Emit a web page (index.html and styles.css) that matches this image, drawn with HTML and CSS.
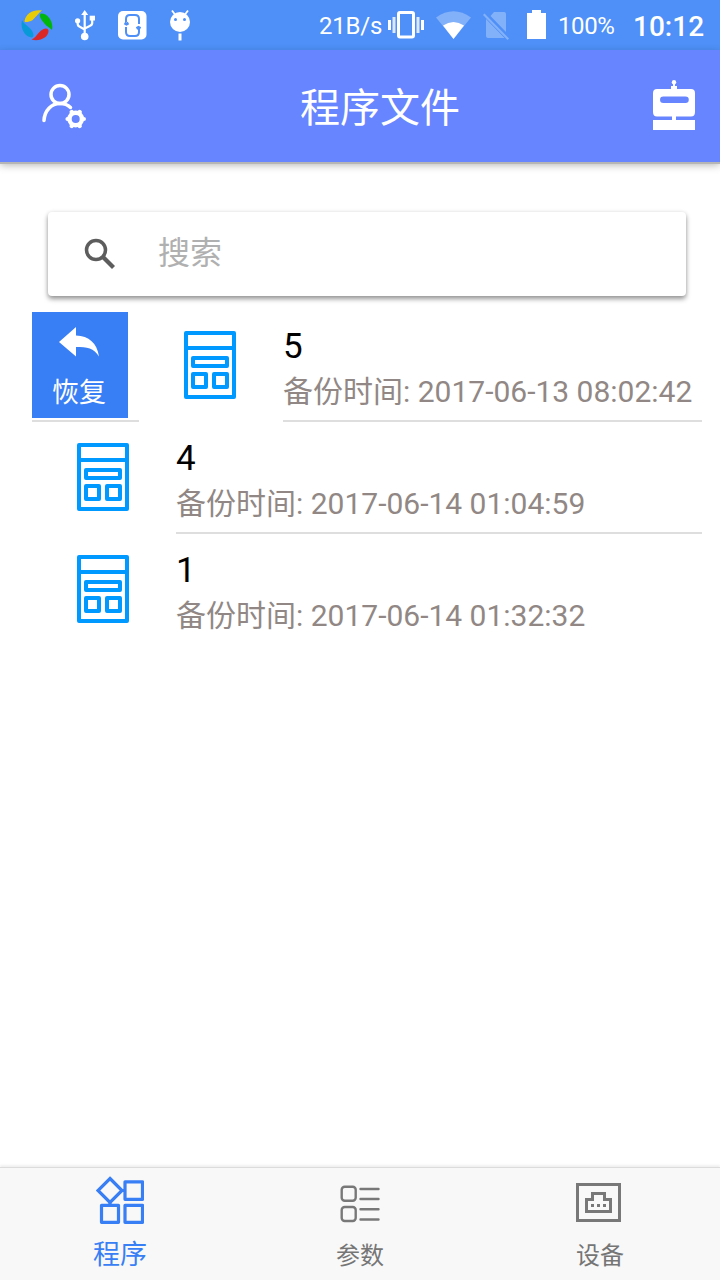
FILE: index.html
```html
<!DOCTYPE html>
<html lang="zh-CN">
<head>
<meta charset="utf-8">
<title>程序文件</title>
<link rel="stylesheet" href="styles.css">
</head>
<body>
<svg width="0" height="0" class="defs">
  <symbol id="doc" viewBox="0 0 52 68">
    <g fill="none" stroke="#0099ff" stroke-width="4" stroke-linejoin="round">
      <rect x="2" y="2" width="48" height="64"/>
      <path d="M2 17H50"/>
      <rect x="9" y="27" width="34" height="8"/>
      <rect x="9" y="43" width="13" height="13"/>
      <rect x="30" y="43" width="13" height="13"/>
    </g>
  </symbol>
</svg>
<div class="status">
  <div class="status-left">
    <svg width="32" height="32" viewBox="0 0 32 32">
      <path d="M3.500 12C5 4 13 0 21 1.500C18 3 17 6 14 8.500C12 11 11 12 8 12.500C5 13.500 3.500 13 3.500 12Z" fill="#e8cc08"/>
      <path d="M20 4.500C26 4 33 12 31 21C29 18.500 26 18 23 14C19 9 17.500 6 20 4.500Z" fill="#00b50b"/>
      <path d="M27.500 21.500C28 28 19 33 10.500 30.500C14 29 15 27 18 23.500C22 19 27 18 27.500 21.500Z" fill="#db2827"/>
      <path d="M11 28.500C4 28-1 20 1 11C2 14 5 15.500 8 18.500C12 22 14 27 11 28.500Z" fill="#0799d8"/>
    </svg>
    <svg width="22" height="32" viewBox="0 0 22 32">
      <g fill="none" stroke="#fff" stroke-width="2.200"><path d="M9.700 5V26M2.700 12V15Q2.700 17 5.200 18L9.700 20.500M17.200 11V14Q17.200 16 14.700 17L9.700 19.500"/></g>
      <path d="M9.700 1L13.200 6H6.200Z" fill="#fff"/><circle cx="9.700" cy="27.500" r="3.800" fill="#fff"/><circle cx="2.600" cy="11.800" r="2.600" fill="#fff"/><path d="M14.700 6.700H20V11.500H14.700Z" fill="#fff"/>
    </svg>
    <svg width="29" height="29" viewBox="0 0 29 29">
      <rect width="28.500" height="28.500" rx="5" fill="#fff"/>
      <g fill="none" stroke="#4e90f7" stroke-width="2"><path d="M8 11V8Q8 4 12 4H17Q21 4 21 8V13"/><path d="M8 16V21Q8 25 12 25H17Q21 25 21 21V18"/><path d="M6.500 12L8.500 13L10.500 12M18.500 17.500L20.500 16.500L22.500 17.500" stroke-width="3"/></g>
    </svg>
    <svg width="20" height="32" viewBox="0 0 20 32">
      <circle cx="10" cy="13" r="10" fill="#fff"/><path d="M5 5.500L2 1.500M15 5.500L18 1.500" stroke="#fff" stroke-width="1.800"/><path d="M10 24.500V31.500" stroke="#fff" stroke-width="3"/>
      <circle cx="5.500" cy="10.500" r="1.500" fill="#4e90f7"/><circle cx="14.500" cy="10.500" r="1.500" fill="#4e90f7"/>
    </svg>
  </div>
  <div class="status-right">
    <span class="speed">21B/s</span>
    <svg class="vibrate" width="36" height="28" viewBox="0 0 36 28"><rect x="10.500" y="1.500" width="15" height="24.500" rx="1.500" fill="none" stroke="#fff" stroke-width="3"/><path d="M1.500 9V19M34.500 9V19" stroke="#fff" stroke-width="3"/><path d="M6 6V22M30 6V22" stroke="#fff" stroke-width="3" opacity=".8"/></svg>
    <svg class="wifi" width="35" height="28" viewBox="0 0 35 28"><path d="M0 6.500Q17.500-6 35 6.500L17.500 28Z" fill="#fff" opacity=".3"/><path d="M7 14.500Q17.500 7.500 28 14.500L17.500 28Z" fill="#fff"/></svg>
    <svg class="sim" width="26" height="28" viewBox="0 0 26 28"><g fill="#fff" opacity=".3"><path d="M11 0H21Q23 0 23 2V20L7.500 4ZM3 7L21.500 26H5Q3 26 3 24Z"/><path d="M1.500 1.500L26 26.500L24.500 28L0 3Z"/></g></svg>
    <svg class="battery" width="19" height="29" viewBox="0 0 19 29"><path d="M5 0H14V3H19V29H0V3H5Z" fill="#fff"/></svg>
    <span class="percent">100%</span>
    <span class="clock">10:12</span>
  </div>
</div>
<header class="header">
  <svg width="46" height="46" viewBox="0 0 46 46">
    <g fill="none" stroke="#fff" stroke-width="3.500" stroke-linecap="round"><circle cx="18" cy="11.500" r="9"/><path d="M2 37.500C2.500 27.500 9.500 20.500 18 20.500Q24.500 20.500 28.500 24.500"/></g>
    <g fill="none" stroke="#fff"><circle cx="33.700" cy="36" r="6.200" stroke-width="4.400"/><path stroke-width="4.200" stroke-linecap="round" d="M26 36H25.500M41.400 36H41.900M29.900 29.200L29.700 28.900M37.500 29.200L37.700 28.900M29.900 42.800L29.700 43.100M37.500 42.800L37.700 43.100"/></g>
  </svg>
  <h1>程序文件</h1>
  <svg class="robot" width="42" height="50" viewBox="0 0 42 50">
    <g fill="#fff"><circle cx="21" cy="2.200" r="2.200"/><path d="M20 3H22V6H24V10H18V6H20Z"/><path fill-rule="evenodd" d="M4 9H38Q42 9 42 13V32Q42 36.500 38 36.500H23V40H42V50H0V40H19V36.500H4Q0 36.500 0 32V13Q0 9 4 9ZM10.300 16.500A3.200 3.200 0 0 0 10.300 23H32.500A3.200 3.200 0 0 0 32.500 16.500Z"/></g>
  </svg>
</header>
<main>
  <div class="search">
    <svg width="32" height="32" viewBox="0 0 32 32" fill="none" stroke="#5d5d5d"><circle cx="12" cy="12" r="9.500" stroke-width="3.500"/><path d="M19 19L29.500 29.500" stroke-width="4.200"/></svg>
    <span>搜索</span>
  </div>
  <ul class="list">
    <li class="row">
      <div class="swipe">
        <div class="restore">
          <svg width="40" height="30" viewBox="0 0 40 30"><path d="M0 15L17 0V8.500C30 9 38 16 40 29.500C35 21 28 20 17 20V29.500Z" fill="#fff"/></svg>
          <span>恢复</span>
        </div>
      </div>
      <div class="item"><svg class="doc"><use href="#doc"/></svg><div class="info"><h2>5</h2><p>备份时间: 2017-06-13 08:02:42</p></div></div>
    </li>
    <li class="row">
      <div class="item"><svg class="doc"><use href="#doc"/></svg><div class="info"><h2>4</h2><p>备份时间: 2017-06-14 01:04:59</p></div></div>
    </li>
    <li class="row last">
      <div class="item"><svg class="doc"><use href="#doc"/></svg><div class="info"><h2>1</h2><p>备份时间: 2017-06-14 01:32:32</p></div></div>
    </li>
  </ul>
</main>
<nav class="tabs">
  <div class="tab active">
    <svg width="48" height="48" viewBox="0 0 48 48" fill="none" stroke="#387ef5" stroke-width="3.200" stroke-linejoin="round"><path d="M14 2.500L26 14.500L14 26.500L2 14.500Z" stroke-linejoin="miter"/><rect x="29" y="5.800" width="17.500" height="17.500"/><rect x="5.500" y="29.300" width="17" height="17"/><rect x="29" y="29.300" width="17.500" height="17"/><path d="M26 14.500H29M14 26.500V29"/></svg>
    <span>程序</span>
  </div>
  <div class="tab">
    <svg width="40" height="38" viewBox="0 0 40 38" fill="none" stroke="#787878" stroke-width="2.400" stroke-linecap="round"><rect x="1.700" y="1.700" width="14" height="14" rx="3"/><rect x="1.700" y="22" width="14" height="14" rx="3"/><path d="M20.500 4H38.500M20.500 14H38.500M20.500 24.200H38.500M20.500 34.500H38.500"/></svg>
    <span>参数</span>
  </div>
  <div class="tab">
    <svg width="45" height="39" viewBox="0 0 45 39" fill="none" stroke="#787878" stroke-width="3"><rect x="1.500" y="1.500" width="42" height="36"/><path d="M10.500 28.500V16.500H16.500V10.500H28.500V16.500H34.500V28.500Z"/><path d="M15 22.500H18M21 22.500H24M27 22.500H30"/></svg>
    <span>设备</span>
  </div>
</nav>
</body>
</html>
```
FILE: styles.css
```css
* { box-sizing: border-box; margin: 0; padding: 0; }
body {
  width: 720px;
  height: 1280px;
  display: flex;
  flex-direction: column;
  overflow: hidden;
  background: #fff;
  font-family: Roboto, "Noto Sans CJK SC", sans-serif;
}
svg { display: block; flex: none; }
.defs { position: absolute; }
.status {
  height: 50px;
  flex: none;
  display: flex;
  align-items: center;
  justify-content: space-between;
  padding: 0 16px 0 21px;
  background: #4e90f7;
  color: #fff;
}
.status-left, .status-right { display: flex; align-items: center; }
.status-left svg + svg { margin-left: 22px; }
.status-left svg:nth-child(3) { margin-left: 21px; }
.status-left svg:nth-child(4) { margin-left: 23px; }
.speed, .percent { font-size: 24px; line-height: 28px; padding-top: 2px; white-space: nowrap; }
.speed { width: 64px; letter-spacing: -0.2px; }
.vibrate { margin-left: 5px; }
.wifi { margin-left: 12px; }
.sim { margin-left: 12px; margin-top: 2px; }
.battery { margin-left: 18px; margin-bottom: 1px; }
.percent { margin-left: 12px; width: 57px; letter-spacing: -0.4px; }
.clock { margin-left: 18px; width: 71px; font-size: 28px; line-height: 32px; font-weight: 500; padding-top: 4px; }
.header {
  height: 112px;
  flex: none;
  display: flex;
  align-items: center;
  justify-content: space-between;
  padding: 0 25px 0 42px;
  background: #6685ff;
  color: #fff;
  box-shadow: 0 2px 0 #b5b5b5, 0 3px 8px rgba(0, 0, 0, .3);
}
.header h1 { font-size: 40px; font-weight: 400; line-height: 60px; margin-left: 19px; padding-top: 5px; }
.robot { margin-bottom: 2px; }
main { flex: 1; padding-top: 50px; }
.search {
  width: 638px;
  height: 84px;
  margin-left: 48px;
  padding-left: 36px;
  display: flex;
  align-items: center;
  gap: 42px;
  border-radius: 4px;
  background: #fff;
  box-shadow: 0 3px 5px rgba(0, 0, 0, .4), 0 0 4px rgba(0, 0, 0, .08);
  color: #b0b0b0;
  font-size: 32px;
}
.search span { line-height: 48px; margin-top: -2px; }
.list { list-style: none; margin-top: 14px; }
.row { display: flex; height: 112px; padding: 0 18px 0 32px; }
.swipe { width: 107px; padding-top: 2px; border-bottom: 2px solid #dedede; }
.restore {
  width: 96px;
  height: 106px;
  padding: 15px 2px 0 0;
  display: flex;
  flex-direction: column;
  align-items: center;
  background: #387ef5;
  color: #fff;
  font-size: 27px;
}
.restore span { line-height: 40px; margin-top: 16px; }
.item { flex: 1; display: flex; padding-left: 45px; gap: 47px; }
.doc { width: 52px; height: 68px; margin-top: 21px; }
.info { flex: 1; padding-top: 16px; border-bottom: 2px solid #dedede; white-space: nowrap; }
.last .info { border-bottom: 0; }
.info h2 { font-size: 35px; line-height: 42px; font-weight: 400; color: #000; }
.info p { font-size: 30px; line-height: 44px; margin-top: 2px; color: #918885; }
.tabs {
  height: 113px;
  flex: none;
  display: grid;
  grid-template-columns: repeat(3, 1fr);
  background: #f8f8f8;
  border-top: 1px solid #dcdcdc;
  box-shadow: 0 -2px 2px rgba(0, 0, 0, .06);
}
.tab { display: flex; flex-direction: column; align-items: center; padding-top: 15px; color: #757575; font-size: 24px; }
.tab span { line-height: 36px; margin-top: 16px; }
.tab:nth-child(2) svg { margin-top: 2px; }
.tab:nth-child(2) span { margin-top: 15px; }
.tab:nth-child(3) svg { margin-right: 3px; }
.tab.active { padding-top: 8px; color: #387ef5; font-size: 27px; }
.tab.active span { line-height: 40px; margin-top: 11px; }
```
